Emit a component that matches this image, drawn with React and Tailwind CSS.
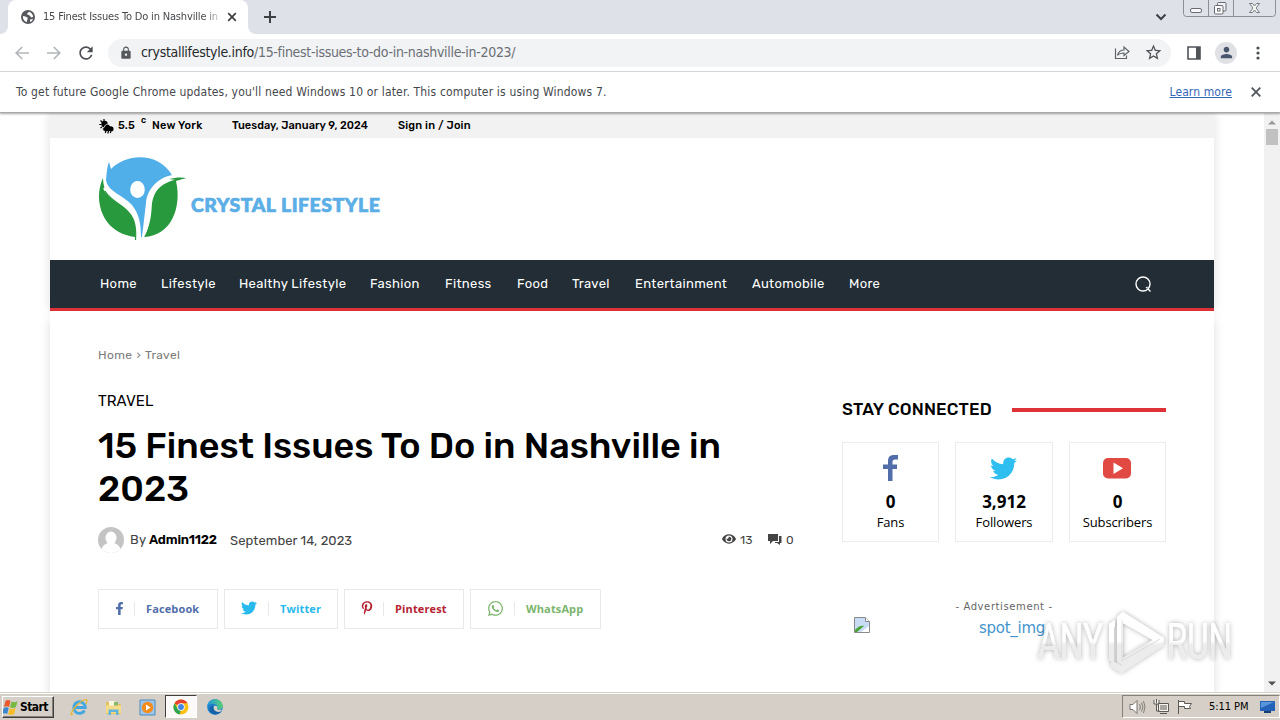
import React from "react";
import {
  FaFacebookF, FaTwitter, FaPinterestP, FaWhatsapp, FaEye,
} from "react-icons/fa";
import { MdLock, MdStarBorder, MdPerson, MdRefresh } from "react-icons/md";

const UI = "font-['DejaVu_Sans_Condensed','DejaVu_Sans',sans-serif] [font-stretch:condensed]";
const RUBIK = "font-['Rubik',Roboto,sans-serif]";

function TabStrip() {
  return (
    <div className="flex h-[34px] shrink-0 bg-[#dee1e8]">
      <div className="w-2 bg-white"><div className="h-full rounded-br-lg bg-[#dee1e8]" /></div>
      <div className="flex h-full w-[240px] items-center rounded-t-lg bg-white pl-[13px]">
        <svg className="size-[14px] shrink-0" viewBox="0 0 14 14"><circle cx="7" cy="7" r="7" fill="#55585d" /><path d="M2 6c2 0 3 1 4.500 1.500C7 9 6 9.500 6 12c-2.500-.5-4.500-3-4-6ZM8 1.800C7 3 6 3 6 4.500c1.500 0 2 .5 3 1.500l1.500 1.500L12.200 7C12 4.500 10.500 2.500 8 1.800ZM9 9.500l3-.5c-.5 1.500-1.500 2.500-3 3z" fill="#fff" /></svg>
        <span className={`${UI} ml-[8px] w-[177px] overflow-hidden whitespace-nowrap text-[11px] tracking-[-0.17px] text-[#45484c] [mask-image:linear-gradient(to_right,black_160px,transparent_182px)]`}>
          15 Finest Issues To Do in Nashville in
        </span>
        <svg className="ml-[7px] size-[10px]" viewBox="0 0 10 10" stroke="#3c4043" strokeWidth="1.7"><path d="M1.2 1.2 8.8 8.8M8.8 1.2 1.2 8.8" /></svg>
      </div>
      <div className="w-2 bg-white"><div className="h-full rounded-bl-lg bg-[#dee1e8]" /></div>
      <div className="flex flex-1 items-center pl-[8px]">
        <svg className="size-3" viewBox="0 0 12 12" stroke="#3c4043" strokeWidth="2"><path d="M6 0V12M0 6H12" /></svg>
      </div>
      <svg className="mt-[13px] mr-[16px] h-[8px] w-[12px]" viewBox="0 0 12 8" fill="none" stroke="#3c4043" strokeWidth="2"><path d="m1.5 1.5 4.5 4.5 4.5-4.5" /></svg>
      <svg className="mr-[4px] h-[18px] w-[93px]" viewBox="0 0 93 18" fill="none" stroke="#686b73">
        <path d="M.5 0V13.5Q.5 16.500 3.500 16.500H89.500Q92.500 16.500 92.500 13.500V0M25.500 0V16M50.500 0V16" stroke="#8c8f96" />
        <rect x="7.500" y="8.500" width="11" height="4" rx="1.500" fill="#f8f8fa" />
        <rect x="34.500" y="2.500" width="8.500" height="8.500" rx="1" fill="#f0f1f5" />
        <rect x="31.500" y="5.500" width="8.500" height="8.500" rx="1" fill="#fff" />
        <rect x="34.500" y="8.500" width="2.500" height="2.500" />
        <path d="M66.500 3.500h3l2 2.500 2-2.500h3l-3.500 4.500 3.500 4.500h-3l-2-2.500-2 2.500h-3l3.500-4.500z" fill="#fafafa" strokeWidth=".9" />
      </svg>
    </div>
  );
}

function Toolbar() {
  return (
    <div className="flex h-[38px] shrink-0 items-center border-b border-[#d9dbdf] bg-white pl-[15px]">
      <svg className="h-[14px] w-[14px]" viewBox="0 0 14 14" fill="none" stroke="#b3b6ba" strokeWidth="1.700"><path d="M14 7H1.500M7.200 1 1.200 7l6 6" /></svg>
      <svg className="ml-[18px] h-[14px] w-[14px]" viewBox="0 0 14 14" fill="none" stroke="#b3b6ba" strokeWidth="1.700"><path d="M0 7h12.500M6.800 1l6 6-6 6" /></svg>
      <MdRefresh className="ml-[15px] size-5 text-[#4c4f54]" />
      <div className="ml-[12px] flex h-[28px] w-[1063px] items-center rounded-full bg-[#f1f3f4] pl-[11px]">
        <MdLock className="size-[14px] text-[#55585d]" />
        <span className={`${UI} ml-[8px] whitespace-nowrap text-[14px] tracking-[-0.3px] text-[#6b6f75]`}>
          <span className="text-[#26282b]">crystallifestyle.info</span>/15-finest-issues-to-do-in-nashville-in-2023/
        </span>
        <svg className="mr-[14px] ml-auto h-[15px] w-[16px]" viewBox="0 0 16 15" fill="none" stroke="#5f6368" strokeWidth="1.200"><path d="M1.500 3.500v10h11v-3M3.500 10.500C4.500 6.500 7 5 10 5V2l5 4.500-5 4V8C7 8 5 8.500 3.500 10.500Z" /></svg>
        <MdStarBorder className="mr-[8px] size-[19px] text-[#4f5358]" />
      </div>
      <svg className="ml-[16px] h-[14px] w-[14px]" viewBox="0 0 14 14"><path d="M1 1h12v12H1z" fill="none" stroke="#4f5358" strokeWidth="1.600" /><path d="M9 1h4v12H9z" fill="#4f5358" /></svg>
      <div className="ml-[14px] flex size-[22px] items-center justify-center rounded-full bg-[#dfe1e5]"><MdPerson className="size-[17px] text-[#4a566e]" /></div>
      <svg className="ml-[19px] h-[14px] w-[4px]" viewBox="0 0 4 14" fill="#4c4f54"><circle cx="2" cy="2" r="1.600" /><circle cx="2" cy="7" r="1.600" /><circle cx="2" cy="12" r="1.600" /></svg>
    </div>
  );
}

function InfoBar() {
  return (
    <div className={`${UI} relative z-10 flex h-[41px] shrink-0 items-center border-b border-[#a9a9a9] bg-white pl-4 text-[12px] text-[#45484c] shadow-[0_1px_2px_rgba(0,0,0,0.35)]`}>
      <span className="whitespace-nowrap tracking-[0.165px]">To get future Google Chrome updates, you'll need Windows 10 or later. This computer is using Windows 7.</span>
      <span className="mr-[19px] ml-auto whitespace-nowrap tracking-[0.1px] text-[#3467b8] underline">Learn more</span>
      <svg className="mr-[19px] size-[10px]" viewBox="0 0 10 10" stroke="#55585d" strokeWidth="1.900"><path d="M.7.7 9.300 9.300M9.300.7.7 9.300" /></svg>
    </div>
  );
}

const NAV = [
  ["Home", "w-[61px]"], ["Lifestyle", "w-[78px]"], ["Healthy Lifestyle", "w-[131px]"], ["Fashion", "w-[75px]"],
  ["Fitness", "w-[72px]"], ["Food", "w-[55px]"], ["Travel", "w-[63px]"], ["Entertainment", "w-[117px]"],
  ["Automobile", "w-[97px]"], ["More", "w-[40px]"],
];

function Logo() {
  return (
    <div className="flex h-[122px] items-start pt-[19px] pl-[49px]">
      <svg className="h-[84px] w-[90px] shrink-0" viewBox="0 0 90 84">
        <path d="M7 23C8 14 8 10 10 5L12 12C28-4 59-5 73 18C58 21 48 33 47 46L43 80H42C42 66 40 57 33 48C23 37 9 35 7 23Z" fill="#50aee8" />
        <path d="M4 21C-6 42 2 76 36 80C38 64 33 57 22 48C11 40 4 35 4 21Z" fill="#289a3d" />
        <path d="M5 31C11 45 31 48 36 61C39 68 38 76 38 83" fill="none" stroke="#fff" strokeWidth="2" />
        <path d="M6 34C13 46 30 50 34.500 63C37 70 37 77 36.500 83" fill="none" stroke="#289a3d" strokeWidth="1.200" />
        <path d="M87 21C71 20 57 26 53 46C52 62 51 68 45 80C73 79 83 49 77 24L87 21Z" fill="#289a3d" />
        <path d="M87 20.500C58 18 48 33 48 50C48 64 46 70 43 79L45 80C52 68 49 60 52 46C55 31 67 23 87 20.500Z" fill="#fff" />
        <path d="M87 21C82 20 76 20.500 70 22L77 23Z" fill="#289a3d" />
        <ellipse cx="38.500" cy="32.500" rx="7.300" ry="8.500" fill="#fff" />
      </svg>
      <span className="mt-[36px] ml-[2px] whitespace-nowrap font-['Lato',sans-serif] text-[19.500px] leading-[24px] font-black tracking-[0.48px] text-[#5baee6] [-webkit-text-stroke:0.7px_#5baee6]">CRYSTAL LIFESTYLE</span>
    </div>
  );
}

function WeatherIcon() {
  return (
    <svg className="h-[16px] w-[16px]" viewBox="0 0 16 16" fill="#000">
      <circle cx="5.500" cy="6" r="3.200" />
      <path d="M5 1v2M1.500 2.500 3 4M.3 6.500h2M1.500 10 3 9" stroke="#000" strokeWidth="1.200" />
      <path d="M6.500 13.500C3 13.500 3 9.500 5.500 9 6 5.500 10.500 5.500 11 8c2.500-.5 4 1 4 3s-1 2.500-2.500 2.500Z" stroke="#f2f2f2" strokeWidth=".8" />
      <path d="m7 13-.7 2M9.500 13l-.7 2.500M12 13l-.7 2" stroke="#000" strokeWidth="1.200" />
    </svg>
  );
}

function SiteHeader() {
  return (
    <header className={`${RUBIK} bg-white`}>
      <div className="flex h-[25px] items-center bg-[#f2f2f2] pl-[49px] text-[11px] font-medium text-black">
        <WeatherIcon />
        <span className="mt-px ml-[3px] w-[23px] tracking-[0.1px]">5.5</span>
        <span className="mb-[9px] w-[11px] text-[9px]">c</span>
        <span className="mt-px w-[80px] whitespace-nowrap tracking-[0.25px]">New York</span>
        <span className="mt-px w-[166px] whitespace-nowrap tracking-[0.04px]">Tuesday, January 9, 2024</span>
        <span className="mt-px whitespace-nowrap tracking-[0.2px]">Sign in / Join</span>
      </div>
      <Logo />
      <nav className="flex h-[51px] items-center border-b-[3px] border-[#dd3338] bg-[#222d35] pl-[50px] text-[13px] text-white">
        {NAV.map(([label, width]) => <a key={label} className={`${width} whitespace-nowrap tracking-[0.33px]`}>{label}</a>)}
        <svg className="mr-[62px] ml-auto size-[18px]" viewBox="0 0 18 18" fill="none" stroke="#fff" strokeWidth="1.400"><circle cx="9" cy="9" r="7" /><path d="m12 13 1.500-1M14 14l2.500 2.500" /></svg>
      </nav>
    </header>
  );
}

const SHARES = [
  [FaFacebookF, "Facebook", "w-[120px]", "text-[#516eab]", "pl-[14px]", "size-[13px]", "ml-[8px]"],
  [FaTwitter, "Twitter", "w-[114px]", "text-[#29b9ed]", "pl-[16px]", "size-[16px]", "ml-[11px]"],
  [FaPinterestP, "Pinterest", "w-[120px]", "text-[#b52432]", "pl-[15px]", "size-[14px]", "ml-[9px]"],
  [FaWhatsapp, "WhatsApp", "w-[131px]", "text-[#7bb56d]", "pl-[16px]", "size-[17px]", "ml-[10px]"],
];

function Article() {
  return (
    <div className={`${RUBIK} w-[696px]`}>
      <div className="text-[12px] leading-[16px] tracking-[0.35px] text-[#7c7c7c]">Home <span className="px-px">›</span> Travel</div>
      <div className="mt-[29px] text-[15px] leading-[18px] tracking-[0.05px] text-black">TRAVEL</div>
      <h1 className="mt-[14px] text-[36px] leading-[43px] font-medium tracking-[-0.02px] text-black">15 Finest Issues To Do in Nashville in<br />2023</h1>
      <div className="mt-[17px] flex h-[26px] items-center text-[13px] text-[#444]">
        <svg className="size-[26px]" viewBox="0 0 26 26"><clipPath id="avatar"><circle cx="13" cy="13" r="13" /></clipPath><g clipPath="url(#avatar)"><path d="M0 0h26v26H0z" fill="#c4c4c4" /><ellipse cx="13" cy="11" rx="5.500" ry="6.500" fill="#fff" /><path d="M3 26c0-7 4-9 7-10h6c3 1 7 3 7 10Z" fill="#fff" /></g></svg>
        <span className="ml-[6px] w-[19px] tracking-[0.2px]">By</span>
        <span className="w-[81px] font-semibold tracking-[-0.2px] text-black">Admin1122</span>
        <span className="mt-[2px] whitespace-nowrap tracking-[0.07px]">September 14, 2023</span>
        <FaEye className="mr-[4px] mb-[3px] ml-auto size-[14px]" />
        <span className="w-[28px] text-[12px]">13</span>
        <svg className="mr-[4px] mb-[3px] h-[12px] w-[14px]" viewBox="0 0 14 12" fill="#444"><path d="M0 1h10v7H5L2 11V8H0zM11 3h2.500v7H12v2l-3-2H7V9h4z" /></svg>
        <span className="w-[8px] text-[12px]">0</span>
      </div>
      <div className="mt-[36px] flex gap-[6px]">
        {SHARES.map(([Icon, label, width, color, pad, size, gap]) => (
          <div key={label} className={`flex h-[40px] items-center border border-[#e9e9e9] ${width} ${color} ${pad}`}>
            <Icon className={`${size} mb-[2px] shrink-0`} />
            <span className={`${gap} h-[14px] w-px bg-[#e9e9e9]`} />
            <span className="ml-[11px] whitespace-nowrap font-['Open_Sans',sans-serif] text-[11px] font-bold tracking-[0.13px]">{label}</span>
          </div>
        ))}
      </div>
    </div>
  );
}

function YouTubeMark() {
  return <svg className="mt-[2px] mr-px h-[21px] w-[28px]" viewBox="0 0 28 21"><rect width="28" height="20.500" rx="5" fill="#e14a42" /><path d="m10.500 4.500 9.500 5.700-9.500 5.800z" fill="#fff" /></svg>;
}

function SocialCard({ icon, count, label }) {
  return (
    <div className="flex h-[100px] flex-col items-center border border-[#ececec] font-['Open_Sans','Noto_Sans',sans-serif] text-black">
      <div className="flex h-[49px] items-center justify-center">{icon}</div>
      <div className="h-[19px] text-[17px] leading-[19px] font-bold">{count}</div>
      <div className="text-[13px] leading-[22px] tracking-[-0.1px]">{label}</div>
    </div>
  );
}

function Sidebar() {
  return (
    <aside className="mt-[52px] ml-[48px] w-[324px]">
      <div className={`${RUBIK} flex h-[22px] items-center`}>
        <span className="w-[170px] whitespace-nowrap text-[17px] font-medium tracking-[0.18px] text-black">STAY CONNECTED</span>
        <span className="h-1 flex-1 bg-[#dd3338]" />
      </div>
      <div className="mt-[21px] grid grid-cols-[97px_98px_97px] gap-4">
        <SocialCard icon={<svg className="h-[26px] w-[15px]" viewBox="0 0 15 26" fill="#516eab"><path d="M5 26V14H0V9.500h5V6c0-4 2-6 6-6h4v4.500h-3C10 4.500 9.500 5.500 9.500 7v2.500H14V14H9.500v12z" /></svg>} count="0" label="Fans" />
        <SocialCard icon={<FaTwitter className="mt-[2px] mr-[2px] size-[27px] text-[#2fbef0]" />} count="3,912" label="Followers" />
        <SocialCard icon={<YouTubeMark />} count="0" label="Subscribers" />
      </div>
      <div className="mt-[58px] text-center font-['DejaVu_Sans',sans-serif] text-[10px] leading-[14px] tracking-[0.6px] text-[#666]">- Advertisement -</div>
      <div className="mt-[3px] flex items-start pl-[12px]">
        <svg className="size-[16px]" viewBox="0 0 16 16"><path d="M.5.5h11l4 4v11H.5z" fill="#c9dcf5" stroke="#8a8a8a" /><path d="M11.500.5v4h4" fill="#fff" stroke="#8a8a8a" /><path d="M1 15v-2C4 9 8 8 10 9l-7 6z" fill="#49a534" /><path d="m7 15 8-6v6z" fill="#fff" /></svg>
        <span className="mt-[2px] ml-[109px] font-['DejaVu_Sans',sans-serif] text-[15px] leading-[19px] tracking-[-0.28px] text-[#4494cd]">spot_img</span>
      </div>
    </aside>
  );
}

function Watermark() {
  return (
    <div className="absolute top-[609px] left-[1037px] z-20">
      <svg className="h-[64px] w-[200px] overflow-visible" viewBox="0 0 200 64">
        <defs>
          <filter id="glow" x="-10%" y="-20%" width="120%" height="140%"><feDropShadow dx="0" dy="0" stdDeviation="2.400" floodColor="#000" floodOpacity=".34" /></filter>
          <linearGradient id="fade" gradientUnits="userSpaceOnUse" x1="0" x2="0" y1="0" y2="64"><stop offset=".5" stopColor="#fff" /><stop offset=".56" stopColor="#ececec" /></linearGradient>
        </defs>
        <g filter="url(#glow)" fill="url(#fade)">
          <text x="1" y="50" textLength="65" lengthAdjust="spacingAndGlyphs" fontFamily="Roboto, sans-serif" fontSize="50">ANY</text>
          <text x="130" y="50" textLength="65" lengthAdjust="spacingAndGlyphs" fontFamily="Roboto, sans-serif" fontSize="50">RUN</text>
          <path d="m72 15 6-4v6l-1 2v33h-5z" />
          <path d="m74 51 10 6 39-25 4 4-43 28-10-7z" />
          <path d="M80 8 86 3 127 29v4L86 58l-6-4ZM86 14v35l30-18Z" fillRule="evenodd" />
        </g>
        <path d="M85 11v41l38-22M78 18v33l7 5" fill="none" stroke="#d5d5d5" strokeWidth=".8" />
      </svg>
    </div>
  );
}

function Page() {
  return (
    <main className="flex h-[579px] shrink-0 overflow-hidden bg-white">
      <div className="mx-[50px] w-[1164px]">
        <div className="shadow-[0_0_10px_rgba(0,0,0,0.13)]">
          <SiteHeader />
        </div>
        <div className="mt-[8px] h-[400px] shadow-[0_0_10px_rgba(0,0,0,0.13)]">
          <div className="relative -top-[8px] flex bg-white pt-[36px] pl-[48px]"><Article /><Sidebar /></div>
        </div>
      </div>
      <div className="flex w-4 flex-col items-center bg-[#f1f1f1]">
        <svg className="mt-[7px] h-[5px] w-[8px]" viewBox="0 0 8 5" fill="#9b9b9b"><path d="M0 4.500 4 .5l4 4z" /></svg>
        <span className="mt-[4px] h-[16px] w-[12px] bg-[#c1c1c1]" />
        <svg className="mt-auto mb-[6px] h-[5px] w-[8px]" viewBox="0 0 8 5" fill="#505050"><path d="M0 .5 4 4.500l4-4z" /></svg>
      </div>
    </main>
  );
}

function WindowsFlag() {
  return <svg className="h-[17px] w-[17px] shrink-0" viewBox="1.500 0 17 17"><path d="M4 2c2-1.500 3.500-1 5 0L7.500 8C6 7 4.500 7 2.500 8z" fill="#e9592b" /><path d="M10 2.500c2 1 4 1 6-.5l-1.500 6c-2 1.300-4 1.300-6 .3z" fill="#79b843" /><path d="M2.200 9c2-1 3.500-1 5 0l-1.500 6c-1.500-1-3-1-5 0z" fill="#3c88d0" /><path d="M8.200 9.300c2 1 4 1 6-.3l-1.500 6c-2 1.300-4 1.300-6 .3z" fill="#f6bd2b" /></svg>;
}

function Taskbar() {
  return (
    <footer className="relative z-10 flex h-[28px] shrink-0 items-end border-t border-[#d6d2ca] bg-[#d5cfc7] shadow-[inset_0_1px_0_#fff]">
      <div className="mb-[2px] ml-[2px] flex h-[22px] w-[52px] items-center border border-t-white border-r-[#404040] border-b-[#404040] border-l-white shadow-[inset_-1px_-1px_0_#858079]">
        <WindowsFlag />
        <span className={`${UI} text-[12px] font-bold tracking-[-0.55px] text-black`}>Start</span>
      </div>
      <svg className="mb-[4px] ml-[16px] h-[18px] w-[19px]" viewBox="0 0 19 18" fill="none"><path d="M14.500 12.500A5.800 5.800 0 1 1 15.300 9.500H5" stroke="#43a8df" strokeWidth="2.800" /><path d="M3 16C-1 19 2 12 7 7s10-7 10-4c0 1-.5 2-1 3" stroke="#e6b536" strokeWidth="1.300" /></svg>
      <svg className="mb-[4px] ml-[16px] h-[17px] w-[17px]" viewBox="0 0 17 17"><path d="M1 3h5l1.500 2H16v10H1z" fill="#e5c45f" /><path d="M4 2h6v6H4z" fill="#f8f6dc" /><path d="M9 3h4v5H9z" fill="#88b76d" /><path d="M1 6.500h15V14H1z" fill="#f5dc88" /><path d="M3.500 16v-5.500h10V16H11v-3H6v3z" fill="#61b4dc" /></svg>
      <svg className="mb-[4px] ml-[17px] size-[17px]" viewBox="0 0 17 17"><path d="M1 1h15v15H1z" fill="#9cc5e8" stroke="#4d8bc1" /><circle cx="8.500" cy="8.500" r="5.700" fill="#f28c1c" /><path d="m7 5.500 4.500 3L7 11.500z" fill="#fff" /></svg>
      <div className="mb-[2px] ml-[9px] flex h-[23px] w-[32px] items-center justify-center border border-t-[#404040] border-r-white border-b-white border-l-[#404040] bg-[#fbfaf8]">
        <svg className="mr-px size-[16px]" viewBox="0 0 16 16"><circle cx="8" cy="8" r="7.500" fill="#fbc116" /><path d="M8 8 1.500 4.300A7.500 7.500 0 0 1 14.500 4.300H8z" fill="#e34133" /><path d="M1.500 4.300 4.800 10 8 11.500l-1.500 4A7.500 7.500 0 0 1 1.500 4.300Z" fill="#30a451" /><circle cx="8" cy="8" r="3.700" fill="#fff" /><circle cx="8" cy="8" r="2.900" fill="#4285e8" /></svg>
      </div>
      <svg className="mb-[5px] ml-[10px] size-[16px]" viewBox="0 0 16 16">
        <defs><linearGradient id="edge" x1="0" x2="1"><stop stopColor="#2496df" /><stop offset="1" stopColor="#57cf73" /></linearGradient></defs>
        <circle cx="8" cy="8" r="7.800" fill="#1b7fcb" />
        <path d="M.3 7C1-2 15-2 15.800 7c0 3-3 4-5.500 3-1-.5 0-1 0-2.500C9.500 4.500 3.500 3.500.3 7Z" fill="url(#edge)" />
        <path d="M6.500 6.500C5 10 8 13 14 12c.5 0 .5.300.2.600-2 3-7 4-10.200 1C1 11 3 7 6.500 6.500Z" fill="#1660a8" />
        <path d="M7 7c2-1 4 .5 3.300 2-1 1 1 2.500 4.500 1.500-.3 1-1 2-1.800 2.300-4 .7-7.500-2-6-5.800Z" fill="#d5cfc7" />
      </svg>
      <div className="mb-[2px] ml-auto flex h-[23px] w-[158px] items-center border border-t-[#858079] border-r-white border-b-white border-l-[#858079] pl-[6px]">
        <svg className="h-[16px] w-[17px]" viewBox="0 0 17 16" fill="none" stroke="#77736d"><path d="M1 5.500h3l4-4v13l-4-4H1z" fill="#fff" /><path d="M10.500 5q2 3 0 6M12.500 3.500q3 4.500 0 9M14.500 2q3 6 0 12" strokeWidth=".9" /></svg>
        <svg className="ml-[7px] h-[16px] w-[16px]" viewBox="0 0 16 16" fill="#f5f3ef" stroke="#5c5954"><path d="M5.500 4.500h10v8h-10zM7 14.500h7M1 1v4h5V1M3.500 5v7h3M3.500 0v4" /><path d="M7 6h7v5H7z" fill="#aaa69f" stroke="none" /></svg>
        <svg className="ml-[8px] h-[16px] w-[16px]" viewBox="0 0 16 16" fill="#fff" stroke="#5c5954"><path d="M1.500 1v14M1.500 2.500h6v2h7l-2 3 1 2h-6v-2h-6z" /></svg>
        <span className={`${UI} mt-[2px] ml-[16px] w-[51px] whitespace-nowrap text-[11px] tracking-[-0.05px] text-black`}>5:11 PM</span>
        <svg className="h-[14px] w-[15px]" viewBox="0 0 15 14"><path d="M0 1h15v10H0z" fill="#2462b8" /><path d="M1 2h13L1 8z" fill="#5796dc" /><path d="M4 11h7v2H4z" fill="#183d72" /></svg>
      </div>
    </footer>
  );
}

export default function App() {
  return (
    <div className="relative flex h-[720px] w-[1280px] flex-col overflow-hidden bg-white">
      <TabStrip />
      <Toolbar />
      <InfoBar />
      <Page />
      <Taskbar />
      <Watermark />
    </div>
  );
}
